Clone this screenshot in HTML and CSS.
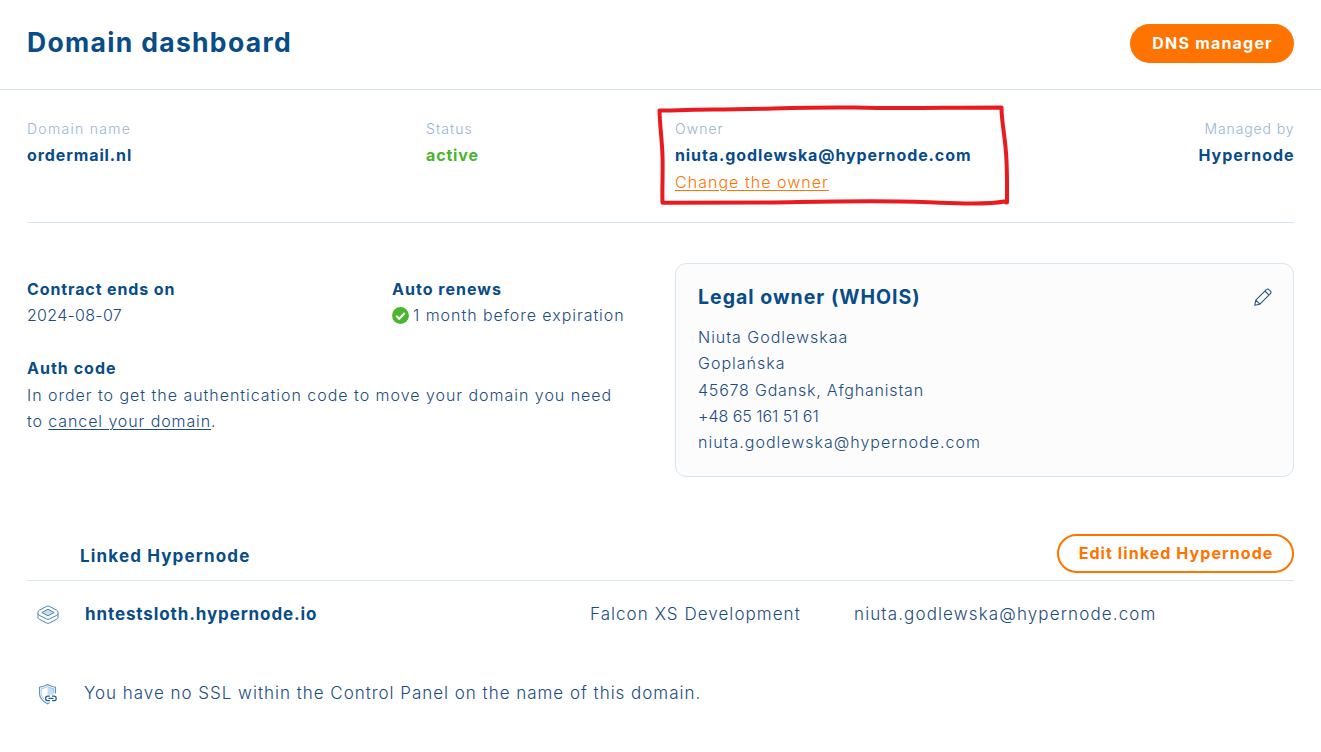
FILE: index.html
```html
<!DOCTYPE html>
<html lang="en">
<head>
<meta charset="utf-8">
<title>Domain dashboard</title>
<link rel="stylesheet" href="styles.css">
</head>
<body>
<header class="header">
  <h1 class="title"><span>Domain dashboard</span></h1>
  <a class="button button-primary"><span class="t-dns">DNS manager</span></a>
</header>
<main class="main">
  <section class="summary">
    <div><div class="label"><span class="t-dn">Domain name</span></div><div class="strong"><span class="t-order">ordermail.nl</span></div></div>
    <div><div class="label"><span class="t-status">Status</span></div><div class="strong active"><span class="t-active">active</span></div></div>
    <div class="owner">
      <div class="label"><span class="t-owner">Owner</span></div>
      <div class="strong"><span class="t-mailb">niuta.godlewska@hypernode.com</span></div>
      <div><a class="link-orange t-change">Change the owner</a></div>
      <svg class="marker" viewBox="0 0 360 110" fill="none" stroke="#e81c1f" stroke-width="4" stroke-linecap="round" stroke-linejoin="round">
        <path d="M4.500 10.500C23 10.500 40 9.500 58 9.500C108 9.500 142 6.800 200 7.500C250 9 285 7.500 346.500 7.500C346.500 20 349 31 350.500 47C352.500 65 352 82 352 102.500L349 101.500C332 105 304 103.500 280 102.500C230 100 178 101.500 118 102.500L7.500 102.800C7 88 8 74 7.500 56C7 40 5 28 4.500 10.500"/>
      </svg>
    </div>
    <div class="managed"><div class="label"><span class="t-managed">Managed by</span></div><div class="strong"><span class="t-hyper">Hypernode</span></div></div>
  </section>
  <section class="details">
    <div class="contract">
      <div class="terms">
        <div><div class="strong"><span class="t-contract">Contract ends on</span></div><div><span class="t-date">2024-08-07</span></div></div>
        <div>
          <div class="strong"><span class="t-auto">Auto renews</span></div>
          <div class="renew">
            <svg class="icon-check" width="17" height="17" viewBox="0 0 17 17"><circle cx="8.500" cy="8.500" r="8.400" fill="#4ab52e"/><path d="M4.200 8.700l3 3 5.500-5.700" fill="none" stroke="#fff" stroke-width="2.100"/></svg>
            <span class="t-month">1 month before expiration</span>
          </div>
        </div>
      </div>
      <div class="auth">
        <div class="strong"><span class="t-auth">Auth code</span></div>
        <div><span class="t-para">In order to get the authentication code to move your domain you need</span></div>
        <div><span class="t-to">to <a class="link">cancel your domain</a>.</span></div>
      </div>
    </div>
    <div class="card">
      <div class="card-head">
        <h2 class="card-title"><span class="t-legal">Legal owner (WHOIS)</span></h2>
        <svg class="pencil" width="18" height="18" viewBox="0 0 18 18" fill="none" stroke="#2b5586" stroke-width="1.100" stroke-linejoin="round"><path d="M.8 17.200l1-5.100L12.300 1.600c.8-.8 1.800-.8 2.600 0l1.500 1.500c.8.800.8 1.800 0 2.600L5.900 16.200zM10.900 3l4.100 4.100M1.800 12.100l4.100 4.100"/></svg>
      </div>
      <div><span class="t-name">Niuta Godlewskaa</span></div>
      <div><span class="t-street">Goplańska</span></div>
      <div><span class="t-city">45678 Gdansk, Afghanistan</span></div>
      <div><span class="t-phone">+48 65 161 51 61</span></div>
      <div><span class="t-mail">niuta.godlewska@hypernode.com</span></div>
    </div>
  </section>
  <section class="linked">
    <div class="linked-head">
      <h3 class="linked-title"><span class="t-linked">Linked Hypernode</span></h3>
      <a class="button button-outline"><span class="t-edit">Edit linked Hypernode</span></a>
    </div>
    <div class="row">
      <svg class="icon-node" width="22" height="20" viewBox="0 0 22 20" fill="none" stroke="#4a84b5" stroke-width="1" stroke-linejoin="round"><path d="M9.700 1.300Q11 .6 12.300 1.300l7.200 3.900q1.500.9 1.500 2v5.300q0 1-1.300 1.700L12.300 18q-1.300.7-2.600 0l-7.400-3.800Q1 13.500 1 12.500V7.200q0-1.100 1.500-2z"/><path d="M1 8.700q.2 1 1.300 1.600l7.400 3.800q1.300.7 2.600 0l7.400-3.800Q20.800 9.700 21 8.700"/><path d="M4.800 7.500L11 4.300l6.200 3.200L11 10.800z" fill="#c5e0f5"/></svg>
      <b class="t-host">hntestsloth.hypernode.io</b>
      <span class="t-falcon">Falcon XS Development</span>
      <span class="t-mail2">niuta.godlewska@hypernode.com</span>
    </div>
    <div class="row row-ssl">
      <svg class="icon-ssl" width="22" height="22" viewBox="0 0 22 22" fill="none" stroke="#5f94c0" stroke-width="1.100"><path d="M10.500 4v9h6.300V5.700Q13.500 5.200 10.500 4z" fill="#c5e0f5" stroke="none"/><path d="M18.500 10.500V4.300Q14 3.700 10.500 1.500 7 3.700 2.500 4.300v6.200q0 6 8 10.300l2.200-1.300"/><path d="M16.800 10V5.700Q13.500 5.200 10.500 3.600 7.500 5.200 4.200 5.700v4.600q0 4.700 6.300 8.600" stroke="#8eb7d8" stroke-width=".8"/><g stroke="#fff" stroke-width="3"><rect x="8.500" y="13.200" width="10.500" height="4.500" rx="2.200"/></g><g stroke="#246297" stroke-width="1.300"><path d="M13 13.200h-2.200a2.200 2.200 0 000 4.400H13M15 13.200h2a2.200 2.200 0 010 4.400h-2M11.500 15.400h5"/></g></svg>
      <span class="t-ssl">You have no SSL within the Control Panel on the name of this domain.</span>
    </div>
  </section>
</main>
</body>
</html>
```
FILE: styles.css
```css
* { box-sizing: border-box; }
body {
  margin: 0;
  background: #fff;
  color: #1c4c80;
  font-family: Inter, "Noto Sans", sans-serif;
  font-size: 16px;
  font-weight: 300;
  line-height: 26.4px;
  white-space: nowrap;
}
h1, h2, h3 { margin: 0; font-weight: 700; color: #084c88; }
.header {
  display: flex;
  justify-content: space-between;
  height: 90px;
  padding: 24px 27px 0;
  border-bottom: 1px solid #d8e6f1;
}
.title { font-size: 26.500px; line-height: 37px; letter-spacing: 1.320px; }
.button {
  height: 39px;
  border-radius: 20px;
  font-weight: 700;
  display: flex;
  align-items: center;
  justify-content: center;
}
.button-primary { width: 164px; background: #ff7300; color: #fff; }
.button-outline { width: 237px; border: 2px solid #ff7300; color: #ff7300; }
.main { padding: 0 27px; }
.summary {
  display: grid;
  grid-template-columns: 399px 249px 1fr auto;
  height: 133px;
  padding-top: 26px;
  border-bottom: 1px solid #d8e6f1;
}
.label { font-size: 14px; color: #9ab5cf; }
.strong { font-weight: 700; color: #084c88; }
.active { color: #4ab52e; }
.owner { position: relative; }
.marker { position: absolute; left: -20px; top: -16px; width: 360px; height: 110px; }
.managed { text-align: right; }
.link-orange { color: #ff7300; }
.link, .link-orange { text-decoration: underline; text-underline-offset: 2px; text-decoration-thickness: 1px; }
.details { display: grid; grid-template-columns: 648px 1fr; padding-top: 40px; }
.contract { padding-top: 13px; }
.terms { display: grid; grid-template-columns: 365px 1fr; }
.renew { display: flex; align-items: center; gap: 4px; }
.icon-check { margin-bottom: 1px; }
.auth { margin-top: 26.400px; }
.card { height: 214px; border: 1px solid #d8e6f1; border-radius: 11px; background: #fcfcfc; padding: 20px 21px 0 22px; line-height: 26.250px; }
.card-head { display: flex; align-items: center; justify-content: space-between; height: 26px; margin-bottom: 14px; }
.card-title { font-size: 19.500px; }
.linked { padding-top: 57px; }
.linked-head { display: flex; justify-content: space-between; height: 47px; padding-left: 53px; border-bottom: 1px solid #d8e6f1; }
.linked-title { font-size: 17px; line-height: 44px; }
.row {
  display: grid;
  grid-template-columns: 48px 505px 264px 1fr;
  align-items: center;
  height: 66px;
  padding-left: 10px;
  font-size: 17px;
}
.row b { font-weight: 700; color: #084c88; }
.row-ssl { height: 92px; grid-template-columns: 47px 1fr; }
.icon-node { margin-top: 2px; }
.icon-ssl { margin-top: 2px; }

/* Tracking per text */
.t-dns { letter-spacing: 1.200px; margin-right: -1.200px; }
.t-dn { letter-spacing: 1.280px; }
.t-order { letter-spacing: 0.900px; }
.t-status, .t-owner { letter-spacing: 1.050px; }
.t-active { letter-spacing: 0.850px; }
.t-mailb { letter-spacing: 0.910px; }
.t-change { letter-spacing: 1.030px; }
.t-managed { letter-spacing: 0.900px; }
.t-hyper { letter-spacing: 0.950px; }
.t-managed, .t-hyper { margin-right: -0.500px; }
.t-contract { letter-spacing: 0.880px; }
.t-date { letter-spacing: 0.300px; }
.t-auto, .t-auth { letter-spacing: 1.020px; }
.t-month { letter-spacing: 0.950px; }
.t-para { letter-spacing: 0.970px; }
.t-to { letter-spacing: 0.900px; }
.t-legal { letter-spacing: 1.010px; }
.t-name { letter-spacing: 0.980px; }
.t-street { letter-spacing: 1px; }
.t-city { letter-spacing: 0.800px; }
.t-phone { letter-spacing: -0.040px; }
.t-mail { letter-spacing: 1px; }
.t-linked { letter-spacing: 1.150px; }
.t-edit { letter-spacing: 1.080px; margin-right: -1.080px; }
.t-host { letter-spacing: 0.890px; }
.t-falcon { letter-spacing: 1.050px; }
.t-mail2 { letter-spacing: 1.130px; }
.t-ssl { letter-spacing: 0.980px; }
```
